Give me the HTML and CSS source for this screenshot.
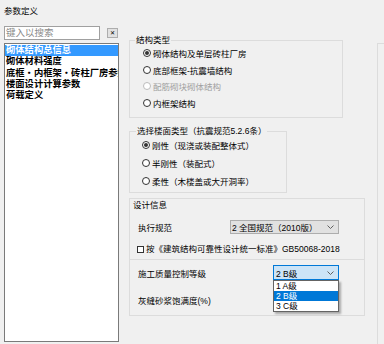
FILE: index.html
```html
<!DOCTYPE html>
<html lang="zh-CN">
<head>
<meta charset="utf-8">
<title>参数定义</title>
<link rel="stylesheet" href="styles.css">
</head>
<body>
<div class="dialog">
  <div class="title">参数定义</div>
  <div class="main">
    <div class="nav">
      <div class="search-row">
        <div class="search">键入以搜索</div>
        <div class="clear">✕</div>
      </div>
      <div class="tree">
        <div class="item sel">砌体结构总信息</div>
        <div class="item">砌体材料强度</div>
        <div class="item">底框・内框架・砖柱厂房参数</div>
        <div class="item">楼面设计计算参数</div>
        <div class="item">荷载定义</div>
      </div>
    </div>
    <div class="content">
      <fieldset class="group g1">
        <legend>结构类型</legend>
        <div class="radios r1">
          <div class="radio on"><span class="dot"></span>砌体结构及单层砖柱厂房</div>
          <div class="radio"><span class="dot"></span>底部框架-抗震墙结构</div>
          <div class="radio off"><span class="dot"></span>配筋砌块砌体结构</div>
          <div class="radio"><span class="dot"></span>内框架结构</div>
        </div>
      </fieldset>
      <fieldset class="group g2">
        <legend>选择楼面类型（抗震规范5.2.6条）</legend>
        <div class="radios r2">
          <div class="radio on"><span class="dot"></span>刚性（现浇或装配整体式）</div>
          <div class="radio"><span class="dot"></span>半刚性（装配式）</div>
          <div class="radio"><span class="dot"></span>柔性（木楼盖或大开洞率）</div>
        </div>
      </fieldset>
      <div class="design">
        <div class="cap">设计信息</div>
        <div class="row code">
          <span class="lbl w1">执行规范</span>
          <div class="select s1"><span>2 全国规范（2010版）</span><svg class="chev" width="7" height="4" viewBox="0 0 7 4"><polyline points="0.5,0.5 3.5,3.5 6.5,0.5" fill="none" stroke="#606060" stroke-width="1"/></svg></div>
        </div>
        <div class="check-row"><span class="box"></span>按《建筑结构可靠性设计统一标准》GB50068-2018</div>
        <div class="sep"></div>
        <div class="row grade">
          <span class="lbl w2">施工质量控制等级</span>
          <div class="select s2"><span>2 B级</span><svg class="chev" width="7" height="4" viewBox="0 0 7 4"><polyline points="0.5,0.5 3.5,3.5 6.5,0.5" fill="none" stroke="#606060" stroke-width="1"/></svg>
            <div class="list">
              <div class="opt">1 A级</div>
              <div class="opt sel">2 B级</div>
              <div class="opt">3 C级</div>
            </div>
          </div>
        </div>
        <div class="row mortar"><span class="lbl">灰缝砂浆饱满度(%)</span></div>
      </div>
    </div>
    <div class="side"></div>
  </div>
</div>
</body>
</html>
```
FILE: styles.css
```css
html, body {
  margin: 0;
  padding: 0;
}
body {
  width: 384px;
  height: 344px;
  overflow: hidden;
  background: #f0f0f0;
  font-family: "Liberation Sans", "Noto Sans CJK SC", sans-serif;
  font-size: 8.5px;
  color: #000;
}
.dialog {
  display: flex;
  flex-direction: column;
  height: 344px;
  overflow: hidden;
}
.title {
  height: 22px;
  line-height: 22px;
  padding-left: 4px;
  font-size: 8.5px;
}
.main {
  display: flex;
  align-items: flex-start;
  height: 322px;
  overflow: hidden;
}
.nav {
  width: 115px;
  margin-left: 4px;
  display: flex;
  flex-direction: column;
}
.search-row {
  margin-top: 4px;
  height: 14px;
  display: flex;
  align-items: center;
}
.search {
  box-sizing: border-box;
  width: 96px;
  height: 14px;
  border: 1px solid #a0a0a0;
  background: #fff;
  color: #8a8a8a;
  font-size: 9.5px;
  line-height: 12px;
  padding-left: 1px;
}
.clear {
  box-sizing: border-box;
  margin-left: 7px;
  width: 11px;
  height: 10px;
  border: 1px solid #adadad;
  background: #e1e1e1;
  font-size: 6px;
  line-height: 8px;
  text-align: center;
}
.tree {
  box-sizing: border-box;
  margin-top: 3px;
  height: 299px;
  border: 1px solid #7a7a7a;
  background: #fff;
  padding-top: 1px;
  overflow: hidden;
}
.item {
  height: 11.25px;
  line-height: 11.25px;
  padding-left: 1px;
  white-space: nowrap;
  overflow: hidden;
  font-size: 9.3px;
  font-weight: bold;
}
.item.sel {
  background: #3399ff;
  color: #fff;
}
.content {
  margin-left: 10px;
  width: 236px;
  flex: none;
  display: flex;
  flex-direction: column;
  align-items: flex-start;
}
.group {
  box-sizing: border-box;
  margin: 0;
  padding: 0;
  border: 1px solid #dcdcdc;
  min-width: 0;
}
.group legend {
  padding: 0 1px;
  line-height: 10px;
  height: 10px;
  font-size: 8.5px;
}
.g1 {
  margin-top: 13px;
  width: 214px;
}
.g1 legend {
  margin-left: 5px;
}
.g2 {
  margin-top: 8px;
  width: 158px;
}
.g2 legend {
  margin-left: 6px;
}
.radios {
  padding-left: 13px;
}
.r1 {
  padding-bottom: 6px;
}
.r1 .radio {
  height: 16.5px;
}
.r2 {
  padding-left: 12px;
  padding-bottom: 2px;
}
.r2 .radio {
  height: 18px;
}
.radio {
  display: flex;
  align-items: center;
  white-space: nowrap;
}
.dot {
  box-sizing: border-box;
  width: 8px;
  height: 8px;
  border: 1px solid #333;
  border-radius: 50%;
  background: #fff;
  margin-right: 2px;
  display: flex;
  align-items: center;
  justify-content: center;
}
.radio.on .dot::after {
  content: "";
  width: 4px;
  height: 4px;
  border-radius: 50%;
  background: #333;
}
.radio.off {
  color: #a0a0a0;
}
.radio.off .dot {
  border-color: #bcbcbc;
}
.design {
  box-sizing: border-box;
  margin-top: 5px;
  width: 236px;
  height: 118px;
  border: 1px solid #dcdcdc;
}
.cap {
  height: 12px;
  line-height: 12px;
  padding-left: 3px;
}
.row {
  display: flex;
  align-items: center;
  padding-left: 8px;
  white-space: nowrap;
}
.code {
  margin-top: 9px;
  height: 14px;
}
.lbl.w1 {
  width: 92px;
}
.lbl.w2 {
  width: 135px;
}
.select {
  box-sizing: border-box;
  position: relative;
  display: flex;
  align-items: center;
  justify-content: space-between;
  padding: 0 4px 0 1px;
  white-space: nowrap;
}
.s1 {
  width: 109px;
  height: 14px;
  border: 1px solid #adadad;
  background: #e1e1e1;
}
.s2 {
  width: 66px;
  height: 15px;
  border: 1px solid #0078d7;
  background: #cce4f7;
  padding-left: 2px;
}
.chev {
  display: block;
}
.check-row {
  margin-top: 10px;
  height: 10px;
  line-height: 10px;
  padding-left: 7px;
  display: flex;
  align-items: center;
  white-space: nowrap;
}
.box {
  box-sizing: border-box;
  width: 7px;
  height: 7px;
  border: 1px solid #333;
  background: #fff;
  margin-right: 2px;
}
.sep {
  margin-top: 5px;
  height: 1px;
  background: #dcdcdc;
}
.grade {
  margin-top: 5px;
  height: 15px;
}
.mortar {
  margin-top: 14px;
  height: 12px;
}
.list {
  box-sizing: border-box;
  position: absolute;
  top: 14px;
  left: -1px;
  width: 66px;
  border: 1px solid #646464;
  background: #fff;
  box-shadow: 2px 2px 2px rgba(0, 0, 0, 0.3);
}
.opt {
  height: 10px;
  line-height: 10px;
  padding-left: 2px;
}
.opt.sel {
  background: #0078d7;
  color: #fff;
}
.side {
  flex: 1;
  margin-left: 12px;
  margin-top: 21px;
  height: 301px;
  box-sizing: border-box;
  border-left: 1px solid #dcdcdc;
  border-top: 1px solid #dcdcdc;
}
```
